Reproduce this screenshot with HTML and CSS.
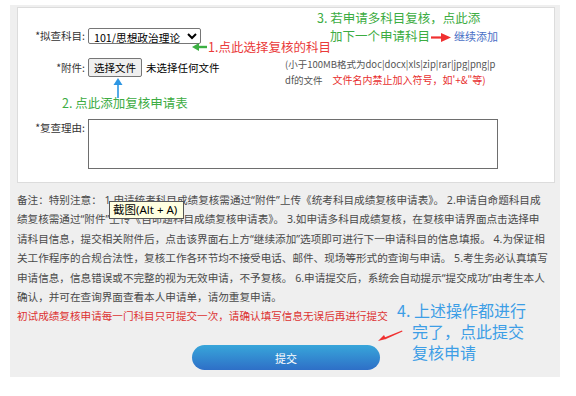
FILE: index.html
```html
<!DOCTYPE html>
<html lang="zh-CN">
<head>
<meta charset="UTF-8">
<meta name="viewport" content="width=device-width, initial-scale=1.0">
<title>初试成绩复核申请</title>
<link rel="stylesheet" href="styles.css">
</head>
<body>

<div class="panel">
  <div class="card">
    <div class="row row-subject">
      <label class="label" for="subject">*拟查科目:</label>
      <div class="field">
        <select class="subject" id="subject">
          <option>101/思想政治理论</option>
        </select>
        <a class="add-more" href="#">继续添加</a>
      </div>
    </div>

    <div class="row row-file">
      <label class="label">*附件:</label>
      <div class="field">
        <button class="file-btn" type="button">选择文件</button>
        <span class="file-name">未选择任何文件</span>
        <p class="file-tip">(小于100MB格式为doc|docx|xls|zip|rar|jpg|png|pdf的文件<span class="warn">文件名内禁止加入符号，如'+&amp;"等)</span></p>
      </div>
    </div>

    <div class="row row-reason">
      <label class="label" for="reason">*复查理由:</label>
      <div class="field">
        <textarea class="reason" id="reason"></textarea>
      </div>
    </div>

    <!-- callouts drawn over the form -->
    <div class="ann ann1">
      <svg width="15" height="8" viewBox="0 0 15 8"><polygon points="0,4 7,0 7,8" fill="#3cb043"/><rect x="6" y="2.8" width="9" height="2.4" fill="#3cb043"/></svg>
      <span>1.点此选择复核的科目</span>
    </div>
    <svg class="ann ann2-arrow" width="10" height="20" viewBox="0 0 10 20"><polygon points="5,0 0.5,7 9.5,7" fill="#2d96e3"/><rect x="4.2" y="6" width="1.6" height="14" fill="#2d96e3"/></svg>
    <div class="ann ann2">2. 点此添加复核申请表</div>
    <div class="ann ann3">
      <span class="line">3. 若申请多科目复核，点此添</span>
      <span class="line indent">加下一个申请科目<svg width="20" height="9" viewBox="0 0 20 9"><rect x="0" y="3.4" width="12" height="2.2" fill="#f03030"/><polygon points="10,0 20,4.5 10,9" fill="#f03030"/></svg></span>
    </div>
  </div>

  <p class="notes">备注：特别注意： 1.申请统考科目成绩复核需通过“附件”上传《统考科目成绩复核申请表》。 2.申请自命题科目成<br>绩复核需通过“附件”上传《自命题科目成绩复核申请表》。 3.如申请多科目成绩复核，在复核申请界面点击选择申<br>请科目信息，提交相关附件后，点击该界面右上方“继续添加”选项即可进行下一申请科目的信息填报。 4.为保证相<br>关工作程序的合规合法性，复核工作各环节均不接受电话、邮件、现场等形式的查询与申请。 5.考生务必认真填写<br>申请信息，信息错误或不完整的视为无效申请，不予复核。 6.申请提交后，系统会自动提示“提交成功”由考生本人<br>确认，并可在查询界面查看本人申请单，请勿重复申请。</p>
  <p class="notice">初试成绩复核申请每一门科目只可提交一次，请确认填写信息无误后再进行提交</p>

  <div class="actions">
    <button class="submit" type="button">提交</button>
  </div>

  <div class="ann ann4">
    <span class="line">4. 上述操作都进行</span>
    <span class="line indent">完了，点此提交</span>
    <span class="line indent">复核申请</span>
  </div>
  <svg class="ann ann4-arrow" width="26" height="14" viewBox="0 0 26 14"><polygon points="1,12 7,6 9,10" fill="#f03030"/><polygon points="7.5,8.6 25,1.6 25.5,2.6 8.4,10.2" fill="#f03030"/></svg>

  <div class="tooltip">截图(Alt + A)</div>
</div>

</body>
</html>
```

FILE: styles.css
```css
* {
  box-sizing: border-box;
}

body {
  margin: 0;
  background: #fff;
  font-family: "Noto Sans CJK SC", sans-serif;
  color: #333;
}

.panel {
  position: relative;
  width: 550px;
  margin: 5px 0 0 10px;
  padding: 2px 5px 7px 7px;
  background: #efefef;
}

.card {
  position: relative;
  background: #fff;
  border: 1px solid #dcdcdc;
  padding: 20px 0 13px;
}

.row {
  display: grid;
  grid-template-columns: 67px 410px;
  column-gap: 3px;
  align-items: start;
}

.row-subject + .row-file {
  margin-top: 14px;
}

.row-file + .row-reason {
  margin-top: 31px;
}

.label {
  font-size: 10.5px;
  text-align: right;
  color: #333;
}

.row-subject .label {
  line-height: 16px;
}

.row-file .label {
  line-height: 19px;
}

.row-reason .label {
  line-height: 18px;
}

.field {
  display: flex;
  align-items: flex-start;
}

.subject {
  width: 113px;
  height: 16px;
  padding: 0 1px;
  font-family: inherit;
  font-size: 10.7px;
  color: #000;
  background: #fff;
  border: 1px solid #767676;
  border-radius: 2px;
}

.add-more {
  margin-left: auto;
  font-size: 11px;
  line-height: 16px;
  color: #4a6fc6;
  text-decoration: none;
}

.file-btn {
  width: 54px;
  height: 19px;
  padding: 0;
  font-family: inherit;
  font-size: 10.5px;
  color: #000;
  background: #efefef;
  border: 1px solid #767676;
  border-radius: 2px;
}

.file-name {
  margin-left: 4px;
  font-size: 10.5px;
  line-height: 19px;
  color: #000;
}

.file-tip {
  width: 213px;
  margin: -1.5px 0 0 auto;
  font-size: 9.5px;
  line-height: 15px;
  color: #555;
  word-break: break-all;
}

.file-tip .warn {
  margin-left: 10px;
  font-size: 10px;
  color: #e83030;
}

.reason {
  display: block;
  width: 410px;
  height: 50px;
  margin: 0;
  border: 1px solid #6e6e6e;
  resize: none;
}

.notes {
  width: 540px;
  margin: 8px 0 0;
  font-family: "Noto Sans", "Noto Sans CJK SC", sans-serif;
  font-size: 10.6px;
  line-height: 19.5px;
  color: #4a4a4a;
}

.notice {
  margin: 0;
  font-size: 10.6px;
  line-height: 15px;
  color: #d33;
}

.actions {
  margin-top: 21px;
  text-align: center;
}

.submit {
  width: 188px;
  height: 25px;
  border: none;
  border-radius: 13px;
  background: linear-gradient(to bottom, #38a6da, #2e6fc7);
  font-family: inherit;
  font-size: 11px;
  color: #fff;
}

/* screenshot callouts */
.ann {
  position: absolute;
  font-size: 12.5px;
  line-height: 18px;
  white-space: nowrap;
}

.ann .line {
  display: block;
}

.ann1 {
  left: 174px;
  top: 30px;
  display: flex;
  align-items: center;
  color: #ea3a3a;
}

.ann1 svg {
  margin-right: 1px;
}

.ann2-arrow {
  left: 95px;
  top: 70px;
}

.ann2 {
  left: 44px;
  top: 86px;
  color: #3cac42;
}

.ann3 {
  left: 299px;
  top: 1px;
  color: #3cac42;
}

.ann3 .indent {
  padding-left: 13px;
}

.ann3 svg {
  margin-left: 1px;
  vertical-align: -1px;
}

.ann4 {
  left: 387px;
  top: 295px;
  font-size: 16px;
  line-height: 21px;
  color: #3d9ee6;
}

.ann4 .indent {
  padding-left: 15px;
}

.ann4-arrow {
  left: 367px;
  top: 324px;
}

.tooltip {
  position: absolute;
  left: 99px;
  top: 196px;
  width: 75px;
  height: 18px;
  padding: 0 3px;
  background: #ffffe1;
  border: 1px solid #555;
  font-family: "Noto Sans", "Noto Sans CJK SC", sans-serif;
  font-size: 11.5px;
  line-height: 16px;
  color: #000;
  white-space: nowrap;
}
```
